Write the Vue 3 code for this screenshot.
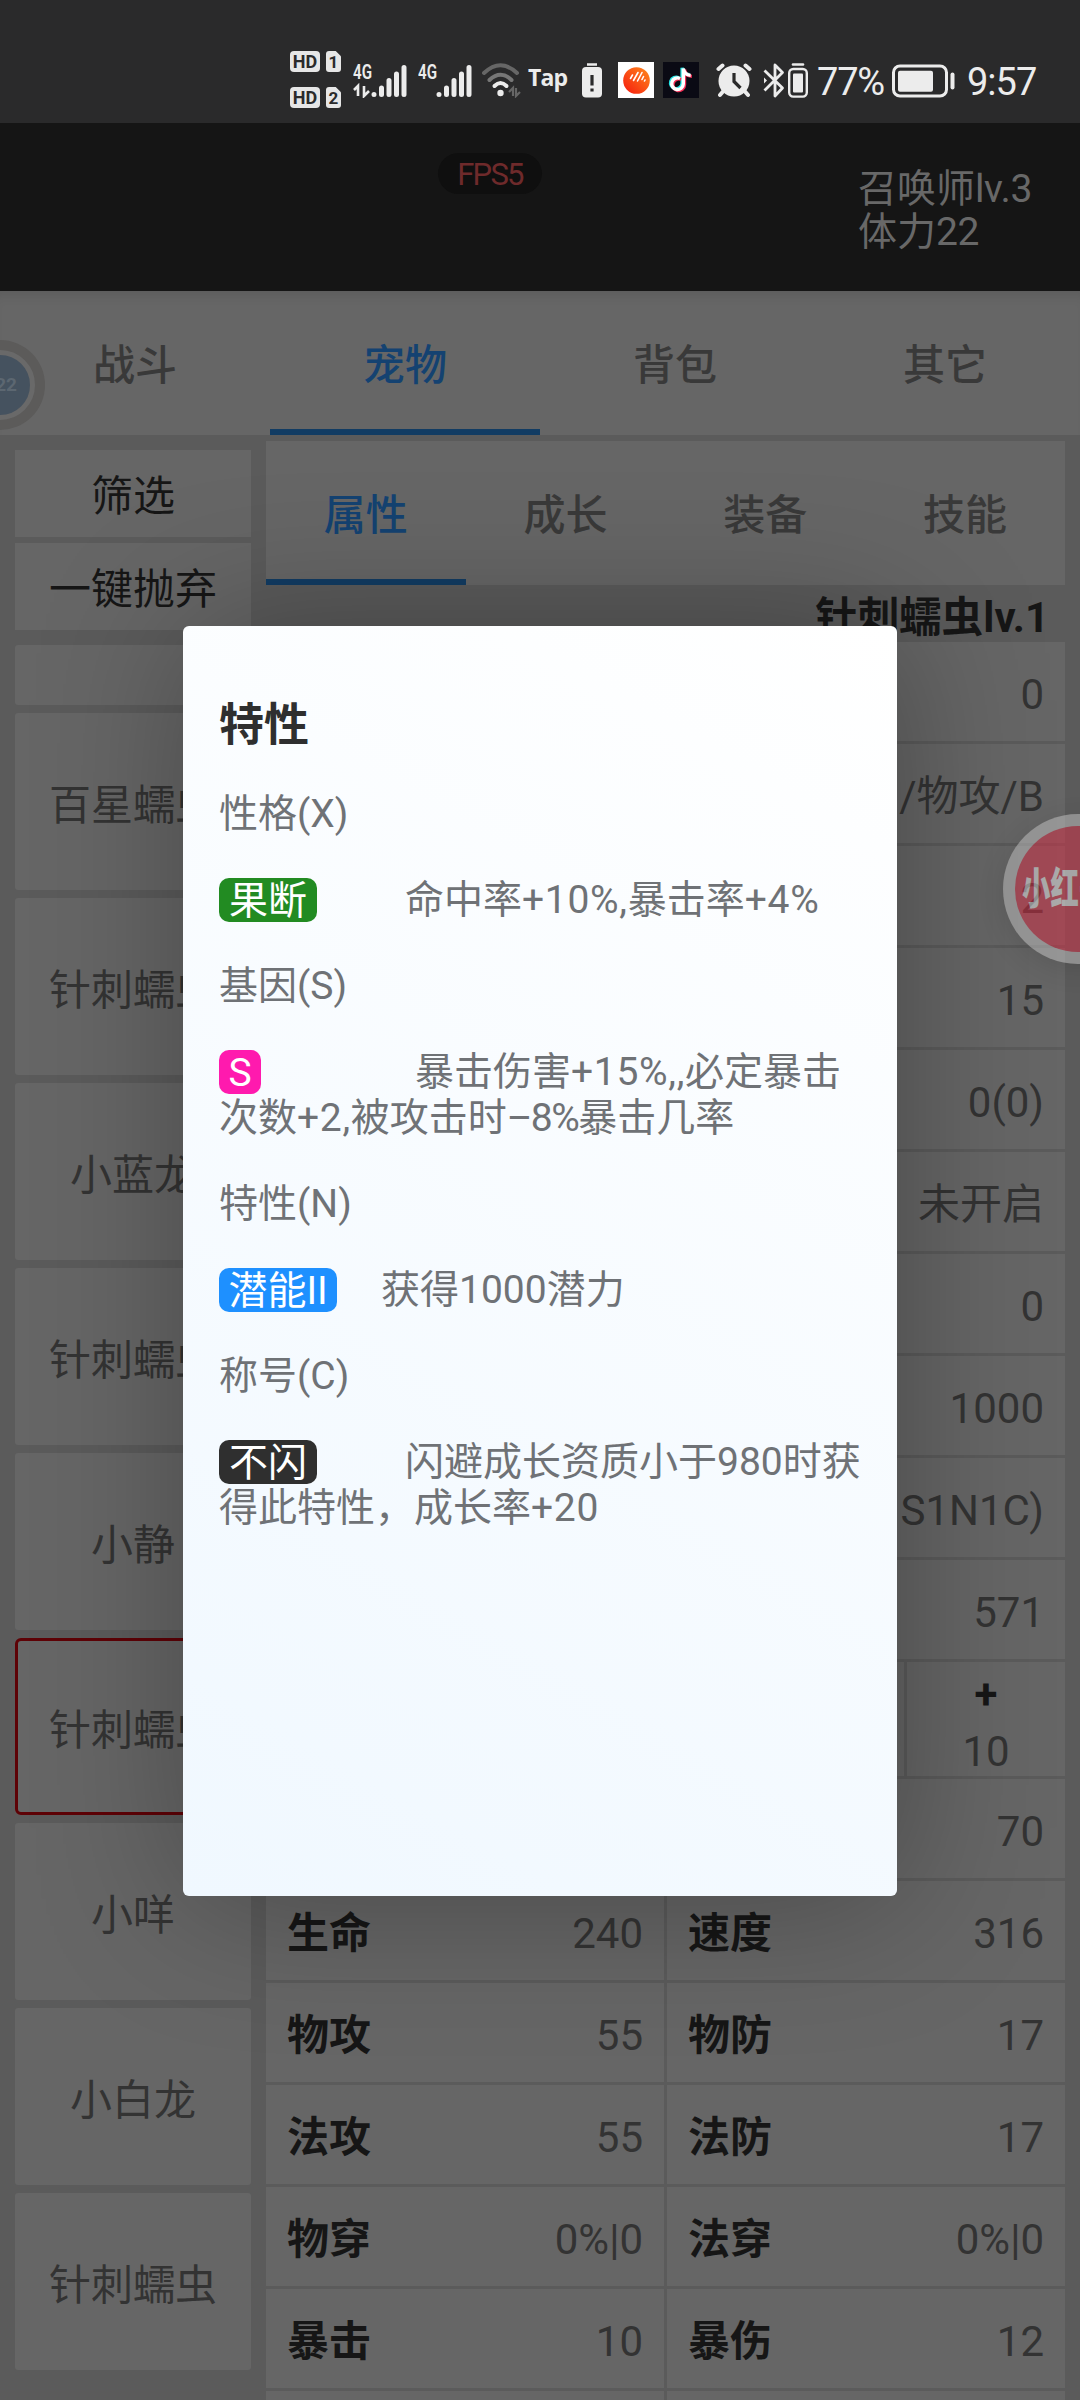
<script setup>
const mainTabs = ['战斗', '宠物', '背包', '其它']
const subTabs = ['属性', '成长', '装备', '技能']
const pets = ['百星蠕虫', '针刺蠕虫', '小蓝龙', '针刺蠕虫', '小静', '针刺蠕虫', '小咩', '小白龙', '针刺蠕虫']
const selectedPet = 5
const singleRows = ['0', '–/物攻/B', '2', '15', '0(0)', '未开启', '0', '1000', '(X1S1N1C)', '571']
const pairRows = [
  ['生命', '240', '速度', '316'],
  ['物攻', '55', '物防', '17'],
  ['法攻', '55', '法防', '17'],
  ['物穿', '0%|0', '法穿', '0%|0'],
  ['暴击', '10', '暴伤', '12'],
]
const traits = [
  { title: '性格(X)', tag: '果断', color: '#228b22', width: 98, gap: 88, lines: ['命中率+10%,暴击率+4%'] },
  { title: '基因(S)', tag: 'S', color: '#ff1aae', width: 42, gap: 154, lines: ['暴击伤害+15%,,必定暴击', '次数+2,被攻击时–8%暴击几率'] },
  { title: '特性(N)', tag: '潜能II', color: '#1e90ff', width: 118, gap: 44, lines: ['获得1000潜力'] },
  { title: '称号(C)', tag: '不闪', color: '#2f2f2f', width: 98, gap: 88, lines: ['闪避成长资质小于980时获', '得此特性，成长率+20'] },
]
const runClass = (t) => (t[0] === '–' ? 'dash' : /^[\x20-\x7e]+$/.test(t) && /[+,%]/.test(t) ? 'lat' : '')
const runs = (s) => s.match(/[\x20-\x7e–]+|[^\x20-\x7e–]+/g).map((t) => ({ t, cls: runClass(t) }))
</script>

<template>
  <div class="phone">
    <header class="status">
      <div class="sims">
        <div v-for="n in 2" :key="n" class="sim">
          <span class="hd">HD</span>
          <span class="slot">{{ n }}</span>
        </div>
      </div>
      <svg class="sig1" width="54" height="36" viewBox="0 0 54 36">
        <text x="0" y="17" textLength="19" lengthAdjust="spacingAndGlyphs" class="g4">4G</text>
        <path d="M1 28l4-4v10M11 24v10l5-5" class="arrows" />
        <path d="M21 32.500v.01M28.500 26v6.500M36 18.500v14M43.500 12v20.500M51 5.500v27" class="bars" />
      </svg>
      <svg class="sig2" width="54" height="36" viewBox="0 0 54 36">
        <text x="0" y="17" textLength="19" lengthAdjust="spacingAndGlyphs" class="g4">4G</text>
        <path d="M21 32.500v.01M28.500 26v6.500M36 18.500v14M43.500 12v20.500M51 5.500v27" class="bars" />
      </svg>
      <svg class="wifi" width="42" height="36" viewBox="0 0 42 36">
        <g fill="none" stroke-width="4" stroke-linecap="round">
          <path d="M2 11Q18.500-4.500 35 11" stroke="#666" />
          <path d="M7.500 18Q18.500 7.500 29.500 18" stroke="#777" />
          <path d="M12.500 24Q18.500 18 24.500 24" stroke="#ececec" />
        </g>
        <circle cx="18.500" cy="31" r="3.200" fill="#ececec" />
        <path d="M27 30l4-4v8M34 26v8l4-4" fill="none" stroke="#666" stroke-width="2.200" />
      </svg>
      <span class="tap">Tap</span>
      <svg class="warn" width="20" height="36" viewBox="0 0 20 36">
        <path d="M5 2.500h10" stroke="#ececec" stroke-width="2.500" />
        <rect y="5" width="20" height="30.500" rx="4" fill="#ececec" />
        <path d="M10 13v10.500M10 26.500v3" stroke="#2a2a2b" stroke-width="3.200" />
      </svg>
      <svg class="app1" width="36" height="36" viewBox="0 0 36 36">
        <defs>
          <linearGradient id="orb" x1="1" y1="0" x2="0" y2="1">
            <stop offset="0" stop-color="#ff8a1c" /><stop offset="1" stop-color="#f5190e" />
          </linearGradient>
        </defs>
        <rect width="36" height="36" fill="#fff" />
        <circle cx="18.500" cy="18.500" r="13.300" fill="url(#orb)" />
        <path d="M12.500 16.500l2-3.500M15.500 18.500l4.500-8M19.500 19l4.500-8.500M24 17.500l1.500-3M26.500 19l.5-1" stroke="#fff" stroke-width="1.600" stroke-linecap="round" />
      </svg>
      <svg class="app2" width="36" height="36" viewBox="0 0 36 36">
        <rect width="36" height="36" fill="#0a0a14" />
        <g fill="none" stroke-width="3.400">
          <path d="M17 16.500a5.800 5.800 0 1 0 3.300 5.400V6.500c.6 4 3.400 6.600 7.400 6.900" stroke="#25e6e6" transform="translate(-1.200 -.8)" />
          <path d="M17 16.500a5.800 5.800 0 1 0 3.300 5.400V6.500c.6 4 3.400 6.600 7.400 6.900" stroke="#f42d55" transform="translate(1.200 1)" />
          <path d="M17 16.500a5.800 5.800 0 1 0 3.300 5.400V6.500c.6 4 3.400 6.600 7.400 6.900" stroke="#fff" />
        </g>
      </svg>
      <svg class="alarm" width="36" height="36" viewBox="0 0 36 36">
        <g fill="none" stroke="#ececec" stroke-width="4" stroke-linecap="round">
          <path d="M2.500 7l4-3.500M33.500 7l-4-3.500M7 29.500l-3 3.500M29 29.500l3 3.500" />
        </g>
        <circle cx="18" cy="19" r="15.500" fill="#ececec" />
        <path d="M18 11v8.500l6.500 6.500" fill="none" stroke="#2a2a2b" stroke-width="3.200" />
      </svg>
      <svg class="bt" width="22" height="36" viewBox="0 0 22 36">
        <path d="M1.500 8.500L19.500 26 12 34V3l7.500 7.500L1.500 28.500" fill="none" stroke="#ececec" stroke-width="2.800" stroke-linejoin="round" />
        <path d="M1 15.500v6l3-3z" fill="#ececec" />
      </svg>
      <svg class="bbat" width="20" height="36" viewBox="0 0 20 36">
        <path d="M5 2.500h10" stroke="#ececec" stroke-width="2.600" stroke-linecap="round" />
        <rect x="1.200" y="7" width="17.600" height="27.600" rx="4" fill="none" stroke="#ececec" stroke-width="2.400" />
        <rect x="5" y="11.500" width="10" height="19" rx="1" fill="#ececec" />
      </svg>
      <span class="pct">77%</span>
      <svg class="bat" width="64" height="36" viewBox="0 0 64 36">
        <rect x="1.500" y="4" width="53" height="30" rx="6.500" fill="none" stroke="#ececec" stroke-width="3" />
        <rect x="6" y="8.700" width="35" height="21" rx="2" fill="#ececec" />
        <path d="M60.500 12.500v13" stroke="#ececec" stroke-width="4" stroke-linecap="round" />
      </svg>
      <span class="clock">9:57</span>
    </header>

    <section class="banner">
      <span class="fps">FPS5</span>
      <div class="player">
        <div>召唤师<i>lv.3</i></div>
        <div>体力<i>22</i></div>
      </div>
    </section>

    <nav class="tabs main">
      <div v-for="(t, i) in mainTabs" :key="t" class="tab" :class="{ on: i === 1 }">{{ t }}</div>
    </nav>

    <main class="body">
      <aside class="left">
        <div class="btn">筛选</div>
        <div class="btn">一键抛弃</div>
        <div class="list">
          <div class="pet cut"></div>
          <div v-for="(p, i) in pets" :key="i" class="pet" :class="{ sel: i === selectedPet }">{{ p }}</div>
        </div>
      </aside>

      <section class="right">
        <nav class="tabs sub">
          <div v-for="(t, i) in subTabs" :key="t" class="tab" :class="{ on: i === 0 }">{{ t }}</div>
        </nav>
        <div class="name">针刺蠕虫<i>lv.1</i></div>
        <div class="table">
          <div v-for="(v, i) in singleRows" :key="i" class="row">
            <div class="cell"><span class="val">{{ v }}</span></div>
          </div>
          <div class="row tall">
            <div class="cell"></div>
            <div class="cell plus"><b>+</b><span>10</span></div>
          </div>
          <div class="row"><div class="cell"><span class="val">70</span></div></div>
          <div v-for="r in pairRows" :key="r[0]" class="row">
            <div class="cell"><b>{{ r[0] }}</b><span class="val">{{ r[1] }}</span></div>
            <div class="cell"><b>{{ r[2] }}</b><span class="val">{{ r[3] }}</span></div>
          </div>
          <div class="row"><div class="cell"></div><div class="cell"></div></div>
        </div>
      </section>
    </main>

    <div class="bubble-left"><div class="core">22</div></div>
    <div class="bubble-right"><div class="core"><span>小红书</span></div></div>

    <div class="modal">
      <h3>特性</h3>
      <template v-for="t in traits" :key="t.title">
        <p>{{ t.title }}</p>
        <p>
          <span v-for="(l, j) in t.lines" :key="j" class="line">
            <span v-if="j === 0" class="tag" :style="{ background: t.color, width: t.width + 'px', marginRight: t.gap + 'px' }">{{ t.tag }}</span>
            <span v-for="(r, k) in runs(l)" :key="k" :class="r.cls">{{ r.t }}</span>
          </span>
        </p>
      </template>
    </div>
  </div>
</template>

<style>
body { margin: 0; background: #5b5b5b; }
</style>

<style scoped>
* { box-sizing: border-box; }
i { font-style: normal; }
.phone {
  position: relative;
  width: 1080px;
  height: 2400px;
  overflow: hidden;
  display: flex;
  flex-direction: column;
  background: #5b5b5b;
  font-family: Roboto, "Noto Sans CJK SC", sans-serif;
  font-size: 42px;
  color: #333;
}

/* status bar */
.status {
  flex: none;
  height: 123px;
  padding: 36px 0 0 290px;
  display: flex;
  align-items: center;
  background: #2a2a2b;
  color: #ececec;
}
.status svg { flex: none; display: block; }
.status > span { flex: none; white-space: nowrap; }
.sims { display: flex; flex-direction: column; gap: 15px; width: 51px; flex: none; }
.sim { display: flex; gap: 6px; }
.hd {
  width: 30px; height: 21px; border-radius: 4px; background: #e6e6e6; color: #2a2a2b;
  font: 700 18px/21px Roboto, sans-serif; text-align: center;
}
.slot {
  width: 15px; height: 21px; border-radius: 3px; background: #e6e6e6; color: #2a2a2b;
  font: 700 17px/22px Roboto, sans-serif; text-align: center;
  clip-path: polygon(0 0, 65% 0, 100% 25%, 100% 100%, 0 100%);
}
.g4 { font: 600 21px Roboto, sans-serif; fill: #ececec; }
.arrows { fill: none; stroke: #ececec; stroke-width: 2.6px; }
.bars { fill: none; stroke: #ececec; stroke-width: 5px; stroke-linecap: round; }
.sig1 { margin-left: 12px; }
.sig2 { margin-left: 11px; }
.wifi { margin-left: 10px; }
.tap { width: 37px; margin-left: 4px; padding-bottom: 5px; font: 700 23px/30px "Open Sans", sans-serif; letter-spacing: -0.8px; }
.warn { margin-left: 17px; }
.app1 { margin-left: 16px; }
.app2 { margin-left: 9px; }
.alarm { margin-left: 17px; }
.bt { margin-left: 11px; }
.bbat { margin-left: 3px; }
.pct { width: 68px; margin-left: 9px; font-size: 38px; line-height: 40px; letter-spacing: -1.2px; padding-top: 4px; }
.bat { margin-left: 7px; }
.clock { margin-left: 11px; font-size: 38px; line-height: 40px; letter-spacing: -1px; padding-top: 4px; }

/* banner */
.banner {
  flex: none;
  height: 168px;
  display: flex;
  justify-content: space-between;
  align-items: flex-start;
  padding: 30px 49px 0 438px;
  background: #151515;
}
.fps {
  width: 104px; height: 41px; border-radius: 21px; background: #0f0f0f; color: #6e2a2b;
  font-size: 31px; line-height: 44px; letter-spacing: -1.7px; text-align: center;
}
.player { width: 173px; padding-top: 15px; color: #686868; font-size: 39px; line-height: 43px; white-space: nowrap; }
.player i { letter-spacing: -0.4px; }

/* tabs */
.tabs { display: flex; height: 144px; flex: none; background: #666; }
.tabs.main { box-shadow: inset 0 12px 12px -8px rgba(0, 0, 0, 0.1); }
.tab {
  flex: 1; display: flex; align-items: center; justify-content: center;
  border-bottom: 6px solid transparent; padding-top: 2px; font-weight: 500; color: #393939;
}
.tab.on { color: #144271; border-color: #123c63; }

/* body */
.body { flex: 1; display: flex; padding: 0 15px; gap: 15px; min-height: 0; }
.left { width: 236px; padding-top: 15px; flex: none; }
.btn {
  height: 87px; margin-bottom: 6px; background: #666; color: #161616;
  line-height: 94px; text-align: center;
}
.list { margin-top: 15px; display: flex; flex-direction: column; gap: 8px; }
.pet {
  height: 177px; flex: none; border-radius: 3px; background: #666;
  line-height: 185px; text-align: center; white-space: nowrap;
}
.pet.cut { height: 60px; }
.pet.sel { border: 3px solid #5e0206; border-radius: 6px; line-height: 179px; }
.right { width: 799px; padding-top: 6px; flex: none; }
.name {
  height: 57px; padding-right: 16px; text-align: right; font-weight: 700; line-height: 65px; color: #161616;
}
.table { display: flex; flex-direction: column; gap: 3px; }
.row { display: flex; gap: 3px; height: 99px; flex: none; }
.cell {
  flex: 1; display: flex; align-items: center; justify-content: space-between;
  padding: 6px 21px 0; background: #666; line-height: 50px;
}
.cell b { color: #161616; }
.val { margin-left: auto; }
.row.tall { height: 114px; }
.cell.plus {
  flex: none; width: 158px; flex-direction: column; justify-content: flex-start; padding: 4px 0 0; line-height: 57px;
}

/* floating bubbles */
.bubble-left {
  position: absolute; left: -45px; top: 340px; width: 90px; height: 90px; border-radius: 50%;
  background: #5c5b5a; display: flex; align-items: center; justify-content: center;
}
.bubble-left .core {
  width: 70px; height: 70px; border-radius: 50%; border: 5px solid #696969; background: #45525f; color: #5c6771;
  font: 700 19px/60px Roboto, sans-serif; text-align: right; padding-right: 13px;
}
.bubble-right {
  position: absolute; left: 1003px; top: 814px; width: 150px; height: 150px; border-radius: 50%;
  background: #c4c4c4; opacity: 0.5; padding: 12px; box-shadow: 0 6px 24px rgba(0, 0, 0, 0.2);
}
.bubble-right .core {
  width: 126px; height: 126px; border-radius: 50%; background: #da2e46; color: #eee;
  font-weight: 900; font-size: 43px; line-height: 126px; white-space: nowrap; padding-left: 7px;
}
.bubble-right span { display: inline-block; transform: scaleX(0.66); transform-origin: left; }

/* modal */
.modal {
  position: absolute; left: 183px; top: 626px; width: 714px; height: 1270px; padding: 72px 36px 0;
  border-radius: 6px; background: linear-gradient(30deg, #f0f8ff, #fff);
  box-shadow: 3px 3px 150px rgba(0, 0, 0, 0.3); color: #6f7276;
}
.modal h3 { margin: 0 0 37px; font-size: 45px; line-height: 56px; color: #2f2f2f; }
.modal p { margin: 0 0 40px; font-size: 39px; line-height: 46px; }
.line { display: flex; align-items: center; height: 46px; white-space: nowrap; }
.lat { letter-spacing: 0.7px; }
.dash { letter-spacing: -1.6px; }
.tag {
  flex: none; height: 44px; border-radius: 10px; color: #fff; line-height: 46px; text-align: center;
}
</style>
